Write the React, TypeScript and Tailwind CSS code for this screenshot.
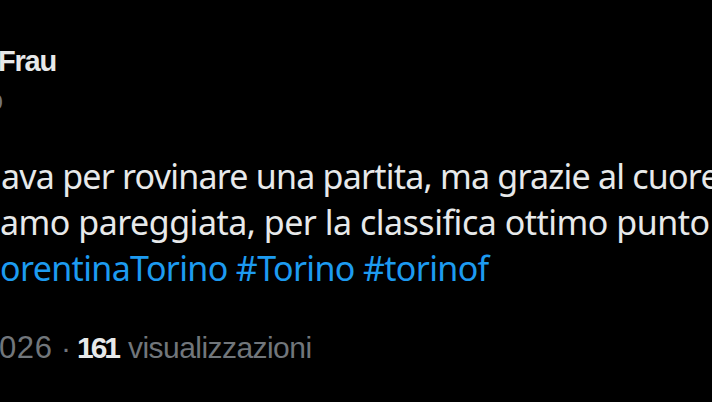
export default function App() {
  return (
    <div className="h-[402px] w-[712px] overflow-hidden bg-black">
      <div className="pt-[44px]">
        {/* author */}
        <div className="-ml-[2px] whitespace-nowrap font-['Liberation_Sans',Arial,sans-serif] text-[29px] font-bold leading-[34px] tracking-[-1.2px] text-[#e7e9ea]">
          Frau
        </div>
        <div className="mt-[5px] -ml-[13px] whitespace-nowrap font-['Liberation_Sans',Arial,sans-serif] text-[29px] leading-[34px] text-[#71767b]">
          o
        </div>

        {/* tweet body */}
        <div className="mt-[36px] whitespace-nowrap font-['Noto_Sans',sans-serif] text-[34px] leading-[46px] text-[#e7e9ea]">
          <div className="pl-[1px] tracking-[-0.78px]">ava per rovinare una partita, ma grazie al cuore</div>
          <div className="tracking-[-0.5px]">amo pareggiata, per la classifica ottimo punto</div>
          <div className="tracking-[-0.65px] text-[#1d9bf0]">orentinaTorino #Torino #torinof</div>
        </div>

        {/* meta */}
        <div className="mt-[40px] flex items-baseline whitespace-nowrap font-['Liberation_Sans',Arial,sans-serif] text-[30px] leading-[34px] text-[#71767b]">
          <span className="-ml-[1px] w-[62px] text-[31px] tracking-[0.6px]">026</span>
          <span className="w-[16px]">·</span>
          <span className="w-[51px] font-bold tracking-[-3px] text-[#e7e9ea]">161</span>
          <span className="tracking-[-0.55px]">visualizzazioni</span>
        </div>
      </div>
    </div>
  );
}
